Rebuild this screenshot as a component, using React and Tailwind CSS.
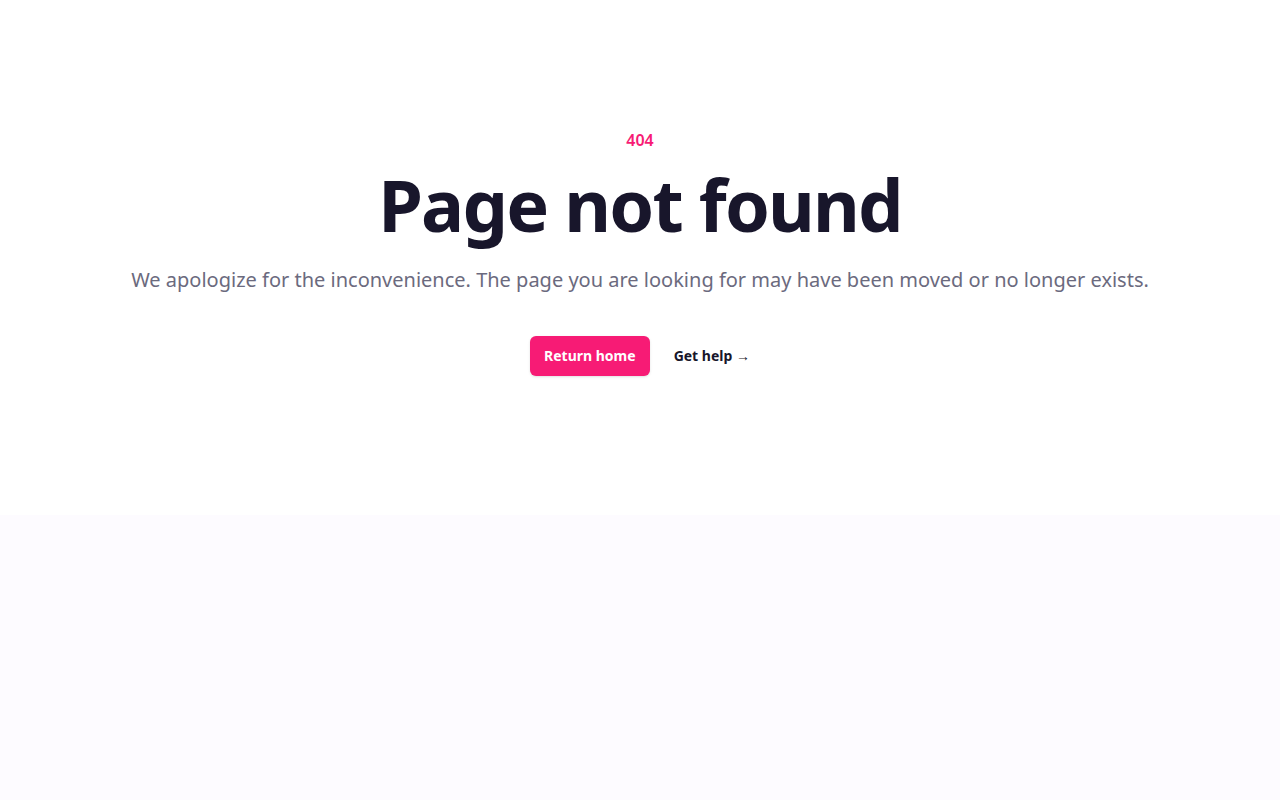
export default function App() {
  return (
    <div className="min-h-screen flex flex-col bg-[#fdfbff]" style={{ fontFamily: '"Noto Sans", sans-serif' }}>
      <main className="grid place-items-center bg-white px-8 pt-32 pb-[139px]">
        <div className="text-center">
          <p className="text-base font-semibold text-[#f71b75]">404</p>
          <h1 className="mt-4 text-7xl leading-none font-bold tracking-tight text-[#18162b]">Page not found</h1>
          <p className="mt-6 text-xl leading-8 font-normal text-[#6b6a7e]">
            We apologize for the inconvenience. The page you are looking for may have been moved or no longer exists.
          </p>
          <div className="mt-10 flex items-center justify-center gap-x-6">
            <a href="#" className="rounded-md bg-[#f71b75] px-3.5 py-2.5 text-sm font-bold text-white shadow-sm">Return home</a>
            <a href="#" className="text-sm font-bold text-[#18162b]">
              Get help <span aria-hidden="true">&rarr;</span>
            </a>
          </div>
        </div>
      </main>
      <div className="flex-1" />
    </div>
  );
}
